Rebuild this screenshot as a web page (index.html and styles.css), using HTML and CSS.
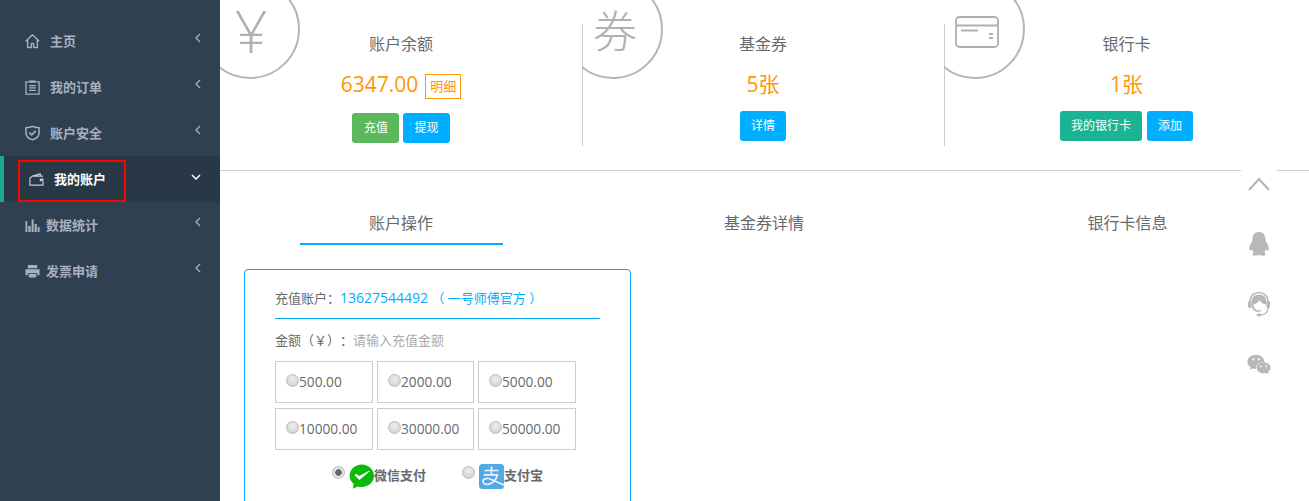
FILE: index.html
```html
<!DOCTYPE html>
<html lang="zh">
<head>
<meta charset="utf-8">
<title>我的账户</title>
<link rel="stylesheet" href="styles.css">
</head>
<body>
<div class="page">
  <nav class="sidebar">
    <ul class="menu">
      <li class="item"><a class="link">
        <svg class="ico" viewBox="0 0 16 16"><path d="M.8 8.300 8 1.300l7.200 7M2.800 7v8h4v-4.500h2.400V15h4V7" fill="none" stroke="#a7b1c2" stroke-width="1.500" stroke-linejoin="round"/></svg>
        <span class="label">主页</span><svg class="arrow" viewBox="0 0 8 10"><path d="M6 1 2 5l4 4" fill="none" stroke="#a7b1c2" stroke-width="1.300"/></svg></a></li>
      <li class="item"><a class="link">
        <svg class="ico" viewBox="0 0 16 16"><path d="M4 2.500H1v13h14v-13h-3" fill="none" stroke="#a7b1c2" stroke-width="1.400"/><path d="M4.500 1h7v2.500h-7z" fill="#a7b1c2"/><path d="M4.500 6.500h7M4.500 9h7M4.500 11.500h7" fill="none" stroke="#a7b1c2" stroke-width="1.400"/></svg>
        <span class="label">我的订单</span><svg class="arrow" viewBox="0 0 8 10"><path d="M6 1 2 5l4 4" fill="none" stroke="#a7b1c2" stroke-width="1.300"/></svg></a></li>
      <li class="item"><a class="link">
        <svg class="ico" viewBox="0 0 16 16"><path d="M1 2.300C5 2.300 6 2 8 1c2 1 3 1.300 7 1.300V8c0 3.500-3 6-7 7.200C4 14 1 11.500 1 8z" fill="none" stroke="#a7b1c2" stroke-width="1.600"/><path d="m4.500 7.300 2.700 2.700 4.300-4.300" fill="none" stroke="#a7b1c2" stroke-width="1.700"/></svg>
        <span class="label">账户安全</span><svg class="arrow" viewBox="0 0 8 10"><path d="M6 1 2 5l4 4" fill="none" stroke="#a7b1c2" stroke-width="1.300"/></svg></a></li>
      <li class="item active"><a class="link boxed">
        <svg class="ico" viewBox="0 0 16 16"><path d="M15 5H3.500L1 7v7.500h14V11M3.500 5 12 2.500V5" fill="none" stroke="#c3c9d3" stroke-width="1.300"/><path d="M15.500 7.500h-4v3h4z" fill="#c3c9d3"/></svg>
        <span class="label">我的账户</span></a><svg class="arrow down" viewBox="0 0 10 8"><path d="m1 2 4 4 4-4" fill="none" stroke="#fff" stroke-width="1.500"/></svg></li>
      <li class="item narrow"><a class="link">
        <svg class="ico" viewBox="0 0 16 16"><path d="M.5 4h2v11.500h-2zM3.500 9h2.500v6.500H3.500zM7 2h2.200v13.500H7zM10.200 7h2.300v8.500h-2.300zM13.500 10h2v5.500h-2z" fill="#a7b1c2"/></svg>
        <span class="label">数据统计</span><svg class="arrow" viewBox="0 0 8 10"><path d="M6 1 2 5l4 4" fill="none" stroke="#a7b1c2" stroke-width="1.300"/></svg></a></li>
      <li class="item narrow"><a class="link">
        <svg class="ico" viewBox="0 0 16 16"><path d="M3 1.500h10V5H3zM.5 6h15v6.500h-2.500V10H3v2.500H.5zM4 11h8v4H4z" fill="#a7b1c2"/></svg>
        <span class="label">发票申请</span><svg class="arrow" viewBox="0 0 8 10"><path d="M6 1 2 5l4 4" fill="none" stroke="#a7b1c2" stroke-width="1.300"/></svg></a></li>
    </ul>
  </nav>

  <main class="main">
    <section class="summary">
      <div class="stat">
        <span class="disc"><span class="disc-text yen">¥</span></span>
        <h3 class="stat-title">账户余额</h3>
        <p class="stat-value">6347.00<a class="detail">明细</a></p>
        <div class="actions low"><a class="btn green">充值</a><a class="btn blue">提现</a></div>
      </div>
      <div class="stat ruled">
        <span class="disc"><span class="disc-text">券</span></span>
        <h3 class="stat-title">基金券</h3>
        <p class="stat-value">5张</p>
        <div class="actions"><a class="btn blue">详情</a></div>
      </div>
      <div class="stat ruled wide">
        <span class="disc"><svg class="card" viewBox="0 0 44 32"><rect x="1" y="1" width="42" height="30" rx="3.500" fill="none" stroke="#b0b0b0" stroke-width="1.800"/><path d="M1 9.500h42M6 14.500h17" fill="none" stroke="#b0b0b0" stroke-width="1.800"/><path d="M34 18h4M34 22h4" fill="none" stroke="#b0b0b0" stroke-width="1.800"/></svg></span>
        <h3 class="stat-title">银行卡</h3>
        <p class="stat-value">1张</p>
        <div class="actions"><a class="btn teal">我的银行卡</a><a class="btn blue">添加</a></div>
      </div>
    </section>

    <div class="tabs">
      <a class="tab current">账户操作</a>
      <a class="tab middle">基金券详情</a>
      <a class="tab wide">银行卡信息</a>
    </div>

    <form class="panel">
      <p class="account">充值账户：<span class="account-no"><span class="digits">13627544492</span> （ 一号师傅官方 ）</span></p>
      <p class="amount">金额（￥）：<span class="hint">请输入充值金额</span></p>
      <div class="options">
        <label class="option"><input class="radio" type="radio" name="a">500.00</label>
        <label class="option"><input class="radio" type="radio" name="a">2000.00</label>
        <label class="option"><input class="radio" type="radio" name="a">5000.00</label>
        <label class="option"><input class="radio" type="radio" name="a">10000.00</label>
        <label class="option"><input class="radio" type="radio" name="a">30000.00</label>
        <label class="option"><input class="radio" type="radio" name="a">50000.00</label>
      </div>
      <div class="pay">
        <label class="pay-way"><input class="radio" type="radio" name="p" checked>
          <svg class="pay-ico" viewBox="0 0 25 25"><path d="M12.800 .5C19.500.5 25 5.500 25 11.800S19.500 23 12.800 23c-1.400 0-2.700-.2-3.900-.6L3.800 24.800l1-4.800C2.300 17.900.6 15 .6 11.800.6 5.500 6.100.5 12.800.5z" fill="#09bb07"/><path d="m5.500 11.200 1.500-1.400 3.300 2.200 9.700-5.300.7.600-10.200 8.700z" fill="#fff"/></svg>微信支付</label>
        <label class="pay-way"><input class="radio" type="radio" name="p">
          <svg class="pay-ico" viewBox="0 0 25 25"><rect width="25" height="25" rx="3.500" fill="#52a9e8"/><path d="M5.500 6.500h14M12.500 2.500v8M4.500 10.800h14c-1.500 5-5 9-9.500 9.500-3 .3-5-1-5-3s2.500-3.500 5.500-2.800c3 .7 7 3 15.500 6.500" fill="none" stroke="#eaf4fc" stroke-width="1.700"/></svg>支付宝</label>
      </div>
    </form>
  </main>

  <aside class="float">
    <svg class="float-up" viewBox="0 0 22 14"><path d="M1 13 11 2l10 11" fill="none" stroke="#b4b4b4" stroke-width="2"/></svg>
    <svg class="float-ico" viewBox="0 0 24 26"><path d="M12 1c4.500 0 6.500 3.500 6.500 7.500 0 1.500 1 2.500 2 4.500 1.500 3 1.500 6 .5 6.500-.6.300-1.500-.6-2-1.600-.3 1.500-1 2.800-2 3.600 1 .5 2 1.200 1.500 2.300-.4.800-2.500 1-4.500.7-1-.2-1.500-.5-2-.5s-1 .3-2 .5c-2 .3-4.100.1-4.500-.7-.5-1.100.5-1.800 1.500-2.300-1-.8-1.700-2.100-2-3.600-.5 1-1.400 1.900-2 1.600-1-.5-1-3.500.5-6.500 1-2 2-3 2-4.500C5.500 4.500 7.500 1 12 1z" fill="#b8b8b8"/></svg>
    <svg class="float-ico" viewBox="0 0 24 26"><path d="M3 14V10C3 5 7 1.500 12 1.500S21 5 21 10v4" fill="none" stroke="#b8b8b8" stroke-width="1.500"/><path d="M12 3.500c4.500 0 7.500 3 7.500 7v3c-2.500 0-6-2-7-4.500-1 2.500-3.500 4-6 4.500 0 3 2 6 5.500 6 1.500 0 2.500-.5 3.500-1.500-1 2-2.500 3-4 3-4.500 0-7-3.500-7-8v-3c0-3.500 3-6.500 7.500-6.500z" fill="#b8b8b8"/><rect x="1" y="10" width="3.500" height="7" rx="1.500" fill="#b8b8b8"/><rect x="19.500" y="10" width="3.500" height="7" rx="1.500" fill="#b8b8b8"/><path d="M21 17c0 4-3 6.500-7 7" fill="none" stroke="#b8b8b8" stroke-width="1.300"/><ellipse cx="12" cy="24" rx="2.500" ry="1.500" fill="#b8b8b8"/></svg>
    <svg class="float-ico" viewBox="0 0 26 24"><path d="M10 1C4.700 1 .5 4.400.5 8.700c0 2.500 1.400 4.500 3.500 5.900L3 17.500l3.300-1.700c1.100.3 2.200.5 3.400.5-.4-3.800 3-7.800 9.300-7.800C18.200 4 14.500 1 10 1z" fill="#b8b8b8"/><path d="M25.500 15c0-3.500-3.500-6-7.500-6s-7.500 2.500-7.500 6 3.500 6 7.500 6c1 0 1.800-.2 2.600-.4l2.700 1.500-.7-2.500c1.800-1.200 3-2.800 3-4.600z" fill="#b8b8b8"/><circle cx="7" cy="6" r="1.200" fill="#fff"/><circle cx="13" cy="6" r="1.200" fill="#fff"/><circle cx="15" cy="13.500" r="1" fill="#fff"/><circle cx="21" cy="13.500" r="1" fill="#fff"/></svg>
  </aside>
</div>
</body>
</html>
```
FILE: styles.css
```css
* { box-sizing: border-box; }
html, body { margin: 0; height: 100%; overflow: hidden; background: #fff; }
body { font-family: "Open Sans", "Noto Sans CJK SC", sans-serif; color: #676a6c; font-size: 13px; text-spacing-trim: space-all; }
p, h3, ul { margin: 0; padding: 0; font-weight: 400; }
a { display: inline-block; }

.page { position: relative; display: flex; width: 1309px; height: 501px; overflow: hidden; }

/* sidebar */
.sidebar { flex: 0 0 220px; background: #2f4050; padding-top: 18px; }
.menu { list-style: none; }
.item { position: relative; height: 46px; display: flex; align-items: center; color: #a7b1c2; font-weight: 700; }
.link { position: relative; display: flex; align-items: center; flex: 1; height: 46px; padding-left: 25px; }
.ico { width: 15px; height: 16px; flex: none; }
.label { margin-left: 10px; line-height: 18px; }
.narrow .label { margin-left: 6px; }
.arrow { position: absolute; left: 194px; top: 15px; width: 8px; height: 10px; }
.active { background: #293846; color: #fff; border-left: 4px solid #19aa8d; }
.boxed { flex: none; width: 108px; height: 42px; margin: 3px 0 0 14px; padding: 0 0 3px 9px; border: 2px solid #f00; }
.boxed .label { margin-left: 10px; }
.down { left: 187px; top: 17px; width: 10px; height: 8px; }

/* main */
.main { flex: 1; min-width: 0; }
.summary { display: flex; height: 171px; border-bottom: 1px solid #ccc; }
.stat { position: relative; flex: 0 0 362px; height: 146px; padding-top: 33px; overflow: hidden; text-align: center; }
.stat.wide { flex: 1 1 auto; }
.ruled::before { content: ""; position: absolute; left: 0; top: 24px; bottom: 0; width: 1px; background: #ccc; }
.disc { position: absolute; left: -20px; top: -21px; width: 100px; height: 100px; border: 2px solid #b5b5b5; border-radius: 50%; display: flex; align-items: center; justify-content: center; }
.ruled .disc { left: -19px; }
.disc-text { font-size: 44px; line-height: 50px; color: #b0b0b0; font-weight: 300; margin: 4px 0 0 4px; }
.yen { font-size: 58px; margin: 4px 0 0 2px; }
.card { width: 44px; height: 32px; margin: 6px 0 0 4px; }
.stat-title { font-size: 16px; line-height: 22px; color: #676a6c; }
.stat-value { margin-top: 14px; font-size: 21px; line-height: 30px; color: #ff9800; display: flex; align-items: center; justify-content: center; }
.detail { margin: 4px 0 0 7px; height: 25px; width: 36px; border: 1px solid #ff9800; font-size: 13px; line-height: 23px; }
.actions { margin-top: 12px; display: flex; justify-content: center; gap: 5px; }
.actions.low { margin-top: 14px; gap: 4px; }
.btn { height: 30px; padding: 0 11px; border-radius: 3px; color: #fff; font-size: 12px; line-height: 30px; }
.green { background: #5cb85c; width: 47px; }
.blue { background: #00aeff; }
.teal { background: #1ab394; }

/* tabs */
.tabs { display: flex; height: 74px; padding-top: 32px; }
.tab { flex: 0 0 362px; height: 42px; font-size: 16px; line-height: 40px; text-align: center; position: relative; }
.tab.middle { flex-basis: 364px; }
.tab.wide { flex: 1 1 auto; }
.current::after { content: ""; position: absolute; left: 80px; width: 203px; bottom: 0; height: 2px; background: #00aeff; }

/* panel */
.panel { width: 387px; height: 300px; margin: 24px 0 0 24px; padding: 19px 30px; border: 1px solid #00aeff; border-radius: 4px; }
.account { height: 30px; line-height: 18px; border-bottom: 1px solid #00aeff; width: 325px; }
.account-no { color: #00aeff; }
.digits { font-size: 14px; }
.amount { margin-top: 11px; line-height: 20px; }
.hint { color: #aaa; }
.options { display: grid; grid-template-columns: 98px 97px 98px; grid-auto-rows: 42px; gap: 5px 4px; margin-top: 11px; }
.option { display: flex; align-items: center; padding: 0 0 1px 10px; border: 1px solid #ccc; font-size: 13.700px; }
.radio { appearance: none; width: 13px; height: 13px; margin: -3px 0 0 0; border-radius: 50%; border: 1px solid #bbb; background: radial-gradient(circle at 50% 35%, #eee, #ccc); flex: none; }
.radio:checked { background: radial-gradient(circle, #666 0 3px, #e4e4e4 3.500px); }
.pay { display: flex; margin-top: 12px; padding-left: 57px; gap: 36px; font-weight: 700; }
.pay-way { display: flex; align-items: center; height: 25px; }
.pay-way .radio { margin: -4px 4px 0 0; }
.pay-ico { width: 25px; height: 25px; flex: none; margin-top: 4px; }

/* floating bar */
.float { position: absolute; left: 1241px; top: 170px; width: 36px; height: 210px; background: #fff; display: flex; flex-direction: column; align-items: center; }
.float-up { width: 22px; height: 14px; margin-top: 7px; }
.float-ico { width: 24px; height: 26px; margin-top: 31px; }
.float-ico:nth-child(2) { margin-top: 40px; }
.float-ico:nth-child(3) { margin-top: 34px; }
.float-ico:nth-child(4) { margin-top: 35px; }
```
